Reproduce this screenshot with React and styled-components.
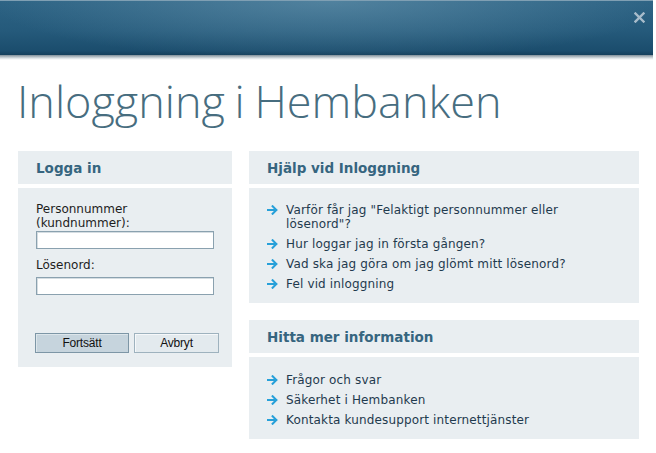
import React from "react";
import styled, { createGlobalStyle } from "styled-components";

const Global = createGlobalStyle`
  html, body { margin: 0; padding: 0; background: #fff; }
  body { font-family: "DejaVu Sans", Verdana, sans-serif; }
  * { box-sizing: border-box; }
`;

const Page = styled.div`
  width: 656px;
  height: 453px;
  background: #fff;
  overflow: hidden;
`;

const TopBar = styled.div`
  position: relative;
  width: 653px;
  height: 55px;
  border-top: 1px solid #7f9fb3;
  background:
    radial-gradient(ellipse 340px 60px at 330px 0px, rgba(110,155,180,0.55), rgba(110,155,180,0) 100%),
    linear-gradient(to bottom, #2d6384 0%, #255a7b 55%, #1b4d6d 92%, #15405c 100%);
`;

const BarShadow = styled.div`
  width: 653px;
  height: 5px;
  background: linear-gradient(to bottom, #7e8e98 0%, #b9c3c9 40%, #e8ecee 75%, #ffffff 100%);
`;

const CloseButton = styled.div`
  position: absolute;
  right: 8px;
  top: 11px;
  width: 11px;
  height: 11px;
  display: flex;
`;

const Title = styled.h1`
  margin: 14px 0 0 17px;
  font-family: "Open Sans", Roboto, sans-serif;
  font-weight: 300;
  font-size: 45px;
  line-height: 54px;
  color: #476d7f;
  word-spacing: -2px;
  white-space: nowrap;
`;

const Content = styled.div`
  display: grid;
  grid-template-columns: 214px 390px;
  column-gap: 17px;
  padding-left: 18px;
  margin-top: 23px;
  align-items: start;
`;

const Column = styled.div`
  display: flex;
  flex-direction: column;
  gap: 17px;
`;

const Panel = styled.section`
  display: flex;
  flex-direction: column;
  gap: 4px;
`;

const PanelHeader = styled.h2`
  margin: 0;
  height: 33px;
  display: flex;
  align-items: center;
  padding: 0 18px;
  background: #e9eef1;
  font-family: "DejaVu Sans", Verdana, sans-serif;
  font-weight: bold;
  font-size: 13.5px;
  color: #36657f;
`;

const PanelBody = styled.div`
  background: #e9eef1;
  padding: ${(p) => p.$pad};
`;

const Label = styled.label`
  display: block;
  font-size: 12px;
  line-height: 14px;
  color: #1d1d1d;
  margin-top: ${(p) => p.$mt || "0"};
`;

const Input = styled.input`
  display: block;
  width: 178px;
  height: 18px;
  margin-top: ${(p) => p.$mt || "1px"};
  border: 1px solid #8aa1af;
  box-shadow: inset 1px 1px 0 #d5dde2;
  background: #fff;
  padding: 0 3px;
  font-size: 12px;
  outline: none;
`;

const ButtonRow = styled.div`
  display: flex;
  gap: 5px;
  margin-top: 38px;
  margin-left: -1px;
`;

const Button = styled.button`
  flex: none;
  width: ${(p) => p.$w};
  height: 20px;
  padding: 0;
  border: 1px solid ${(p) => (p.$primary ? "#7d96a6" : "#9eb2be")};
  box-shadow: inset 1px 1px 0 ${(p) => (p.$primary ? "#dde6eb" : "#f6f8fa")};
  background: ${(p) => (p.$primary ? "#c6d4dd" : "#e3eaee")};
  font-family: "Liberation Sans", Arial, sans-serif;
  font-size: 12px;
  color: #111;
  letter-spacing: -0.2px;
`;

const LinkList = styled.ul`
  list-style: none;
  margin: 0;
  padding: 0;
  display: flex;
  flex-direction: column;
  gap: 6px;
`;

const LinkItem = styled.li`
  display: flex;
  align-items: flex-start;
  gap: 8px;
  font-size: 12px;
  line-height: 14px;
  color: #1f3a4e;
  letter-spacing: 0.15px;
`;

const ArrowBox = styled.span`
  flex: none;
  width: 11px;
  height: 14px;
  display: flex;
  align-items: center;
`;

const LinkText = styled.span`
  max-width: 290px;
`;

const Arrow = () => (
  <ArrowBox>
    <svg width="11" height="10" viewBox="0 0 11 10">
      <path d="M0.5 5H9.2M5.6 1.2L9.4 5L5.6 8.8" fill="none" stroke="#27a0d9" strokeWidth="2" strokeLinecap="square" />
    </svg>
  </ArrowBox>
);

const Link = ({ children }) => (
  <LinkItem>
    <Arrow />
    <LinkText>{children}</LinkText>
  </LinkItem>
);

export default function App() {
  return (
    <Page>
      <Global />
      <TopBar>
        <CloseButton>
          <svg width="11" height="11" viewBox="0 0 11 11">
            <path d="M1.5 1.5L9.5 9.5M9.5 1.5L1.5 9.5" stroke="#a8bccb" strokeWidth="2.4" strokeLinecap="square" />
          </svg>
        </CloseButton>
      </TopBar>
      <BarShadow />
      <Title>Inloggning i Hembanken</Title>
      <Content>
        <Column>
          <Panel>
            <PanelHeader>Logga in</PanelHeader>
            <PanelBody $pad="14px 18px 14px 18px">
              <Label>Personnummer<br />(kundnummer):</Label>
              <Input type="text" />
              <Label $mt="9px">Lösenord:</Label>
              <Input type="password" $mt="5px" />
              <ButtonRow>
                <Button $primary $w="94px">Fortsätt</Button>
                <Button $w="85px">Avbryt</Button>
              </ButtonRow>
            </PanelBody>
          </Panel>
        </Column>
        <Column>
          <Panel>
            <PanelHeader>Hjälp vid Inloggning</PanelHeader>
            <PanelBody $pad="15px 18px 12px 18px">
              <LinkList>
                <Link>Varför får jag "Felaktigt personnummer eller lösenord"?</Link>
                <Link>Hur loggar jag in första gången?</Link>
                <Link>Vad ska jag göra om jag glömt mitt lösenord?</Link>
                <Link>Fel vid inloggning</Link>
              </LinkList>
            </PanelBody>
          </Panel>
          <Panel>
            <PanelHeader>Hitta mer information</PanelHeader>
            <PanelBody $pad="16px 18px 12px 18px">
              <LinkList>
                <Link>Frågor och svar</Link>
                <Link>Säkerhet i Hembanken</Link>
                <Link>Kontakta kundesupport internettjänster</Link>
              </LinkList>
            </PanelBody>
          </Panel>
        </Column>
      </Content>
    </Page>
  );
}
